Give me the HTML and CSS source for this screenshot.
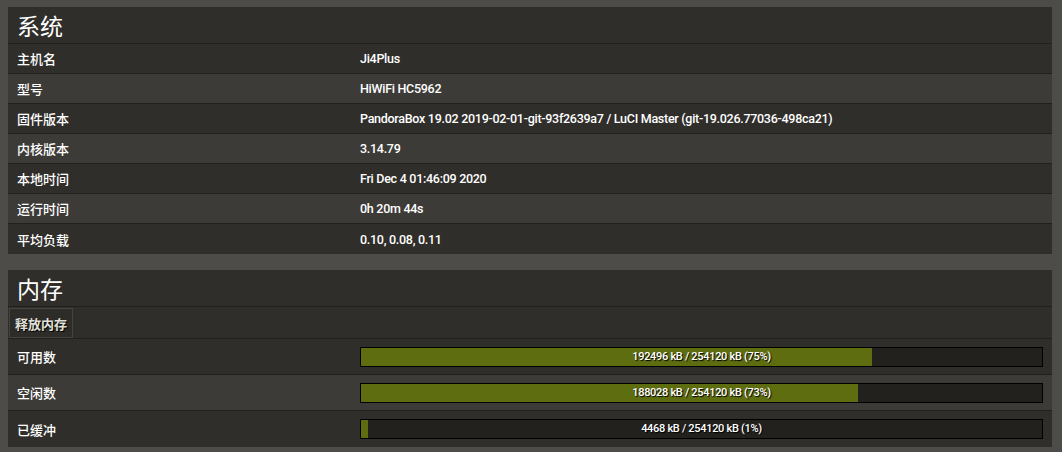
FILE: index.html
```html
<!DOCTYPE html>
<html lang="zh-CN">
<head>
<meta charset="utf-8">
<title>状态</title>
<link rel="stylesheet" href="styles.css">
</head>
<body>
<div class="panel">
  <h2 class="panel-title">系统</h2>
  <table class="info">
    <tr><td class="label">主机名</td><td class="value">Ji4Plus</td></tr>
    <tr class="alt"><td class="label">型号</td><td class="value">HiWiFi HC5962</td></tr>
    <tr><td class="label">固件版本</td><td class="value">PandoraBox 19.02 2019-02-01-git-93f2639a7 / LuCI Master (git-19.026.77036-498ca21)</td></tr>
    <tr class="alt"><td class="label">内核版本</td><td class="value">3.14.79</td></tr>
    <tr><td class="label">本地时间</td><td class="value">Fri Dec 4 01:46:09 2020</td></tr>
    <tr class="alt"><td class="label">运行时间</td><td class="value">0h 20m 44s</td></tr>
    <tr class="last"><td class="label">平均负载</td><td class="value">0.10, 0.08, 0.11</td></tr>
  </table>
</div>
<div class="panel">
  <h2 class="panel-title">内存</h2>
  <div class="actions"><button class="btn">释放内存</button></div>
  <table class="info mem">
    <tr><td class="label">可用数</td><td class="value"><div class="bar"><div class="fill" style="width:75%"></div><span class="bar-text">192496 kB / 254120 kB (75%)</span></div></td></tr>
    <tr class="alt"><td class="label">空闲数</td><td class="value"><div class="bar"><div class="fill" style="width:73%"></div><span class="bar-text">188028 kB / 254120 kB (73%)</span></div></td></tr>
    <tr class="last"><td class="label">已缓冲</td><td class="value"><div class="bar"><div class="fill" style="width:1%"></div><span class="bar-text">4468 kB / 254120 kB (1%)</span></div></td></tr>
  </table>
</div>
</body>
</html>
```
FILE: styles.css
```css
html, body {
  margin: 0;
  padding: 0;
}
body {
  background: #4e4c48;
  padding: 7px 10px 0 8px;
  font-family: Roboto, "Liberation Sans", "Noto Sans CJK SC", sans-serif;
  font-size: 13px;
  color: #f4f4f4;
}
.panel {
  background: #302e2a;
  margin-bottom: 16px;
}
.panel-title {
  margin: 0;
  height: 36px;
  line-height: 36px;
  padding-left: 9px;
  font-size: 23px;
  font-weight: normal;
  color: #ffffff;
  border-bottom: 1px solid #22211e;
  font-family: "Noto Sans CJK SC", sans-serif;
}
.info {
  width: 100%;
  border-collapse: collapse;
}
.info td {
  height: 29px;
  padding: 0 9px;
  border-bottom: 1px solid #22211e;
  vertical-align: middle;
}
.info tr.last td {
  border-bottom: none;
  height: 30px;
}
.info tr.alt td {
  background: #3d3b37;
}
.info td.label {
  width: 325px;
  font-family: "Noto Sans CJK SC", sans-serif;
  font-size: 13px;
  font-weight: 500;
  color: #ffffff;
}
.value {
  font-weight: 500;
  font-size: 12.5px;
  letter-spacing: -0.28px;
  color: #ffffff;
}
.mem td {
  height: 35px;
}
.mem tr.last td {
  height: 36px;
}
.actions {
  height: 30px;
  padding: 1px 0 0 1px;
  border-bottom: 1px solid #22211e;
  box-sizing: content-box;
  display: flex;
}
.btn {
  height: 30px;
  margin: 0;
  padding: 0 5px;
  background: #2e2c29;
  border: 1px solid #45433f;
  color: #e0e0d8;
  font-family: "Noto Sans CJK SC", sans-serif;
  font-size: 13px;
  font-weight: bold;
  text-shadow: 1px 1px 0 #000;
}
.bar {
  position: relative;
  height: 18px;
  border: 1px solid #000;
  background: #22211e;
}
.fill {
  height: 100%;
  background: #5e6d10;
}
.bar-text {
  position: absolute;
  inset: 0;
  text-align: center;
  line-height: 18px;
  font-size: 11px;
  font-weight: 500;
  letter-spacing: -0.3px;
  color: #fff;
  text-shadow: 1px 1px 1px #000;
}
```
